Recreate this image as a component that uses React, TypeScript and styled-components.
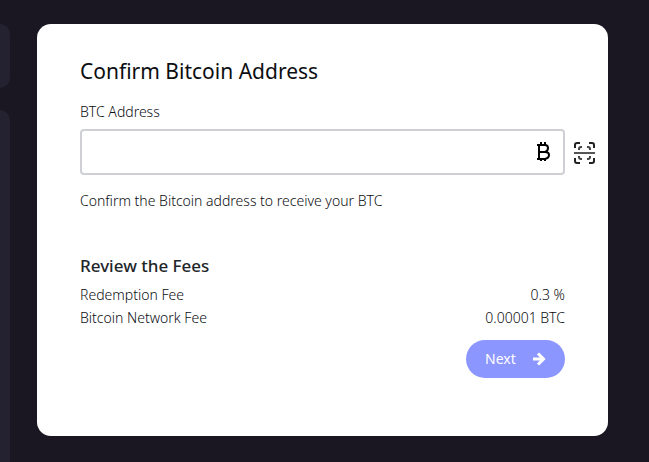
import React from "react";
import styled, { createGlobalStyle } from "styled-components";

const GlobalStyle = createGlobalStyle`
  *, *::before, *::after { box-sizing: border-box; }
  body {
    margin: 0;
    background: #1a1723;
    color: #0c0e12;
    font: 300 14px/20px "Noto Sans", "Open Sans", sans-serif;
  }
`;

const Page = styled.div`
  display: flex;
  gap: 27px;
  min-height: 100vh;
  padding: 24px 41px 0 0;
`;

const Rail = styled.aside`
  display: flex;
  flex-direction: column;
  gap: 22px;
  flex: 0 0 10px;
`;

const Panel = styled.div<{ $fill?: boolean }>`
  flex: ${(p) => (p.$fill ? "1 0 auto" : "0 0 64px")};
  background: #242131;
  border-radius: ${(p) => (p.$fill ? "0 12px 0 0" : "0 12px 12px 0")};
`;

const Card = styled.form`
  display: grid;
  flex: 1;
  align-self: flex-start;
  grid-template-columns: minmax(0, 1fr) 23px;
  column-gap: 8px;
  padding: 32px 12px 58px 43px;
  background: #fff;
  border-radius: 14px;
`;

const Title = styled.h1`
  grid-column: 1;
  margin: 0 0 16px;
  font-size: 21px;
  line-height: 30px;
  font-weight: 400;
`;

const Label = styled.label`
  grid-column: 1;
  margin-bottom: 7px;
`;

const Field = styled.div`
  display: flex;
  grid-column: 1;
  align-items: center;
  height: 46px;
  padding-right: 12px;
  border: 2px solid #ced0d5;
  border-radius: 4px;
  &:focus-within { border-color: #8c96ff; }
`;

const Input = styled.input`
  flex: 1;
  min-width: 0;
  height: 100%;
  padding: 0 12px;
  border: 0;
  outline: 0;
  background: transparent;
  color: inherit;
  font: inherit;
`;

const ScanButton = styled.button`
  display: flex;
  grid-column: 2;
  align-items: center;
  justify-content: center;
  padding: 2px 0 0;
  border: 0;
  background: none;
  color: #222;
  cursor: pointer;
`;

const Hint = styled.p`
  grid-column: 1;
  margin: 16px 0 43px;
`;

const Subtitle = styled.h2`
  grid-column: 1;
  margin: 0 0 5px;
  color: #212529;
  font-size: 17px;
  line-height: 24px;
  font-weight: 500;
`;

const Fees = styled.dl`
  grid-column: 1;
  margin: 0 0 11px;
`;

const Fee = styled.div`
  display: flex;
  justify-content: space-between;
  line-height: 23px;
  dd { margin: 0; }
`;

const NextButton = styled.button`
  display: flex;
  grid-column: 1;
  justify-self: end;
  align-items: center;
  justify-content: space-between;
  width: 99px;
  height: 38px;
  padding: 0 19px;
  border: 0;
  border-radius: 19px;
  background: #8c96ff;
  color: #fff;
  font: inherit;
  font-weight: 400;
  cursor: pointer;
`;

const BitcoinIcon = () => (
  <svg width="15" height="20" viewBox="0 0 15 20" fill="none" stroke="#000" strokeWidth="2" aria-hidden="true">
    <path d="M1 3H9Q12 3 12 6T9 10H3M9 10Q13 10 13 13T9 17H1M3 3V17" />
    <path d="M5 0V3M9 0V3M5 17V19M9 17V19" />
  </svg>
);

const ScanIcon = () => (
  <svg width="23" height="24" viewBox="0 0 23 24" fill="none" stroke="currentColor" strokeWidth="2" aria-hidden="true">
    <path d="M2 7V4Q2 2 4 2H7M16 2H19Q21 2 21 4V7M2 17V20Q2 22 4 22H7M16 22H19Q21 22 21 20V17" />
    <path d="M6 9V8Q6 6 8 6H9M14 6H15Q17 6 17 8V9M6 15V16Q6 18 8 18H9M14 18H15Q17 18 17 16V15" stroke="#444" />
    <path d="M1 12H22" stroke="#555" />
  </svg>
);

const ArrowIcon = () => (
  <svg width="14" height="14" viewBox="0 0 14 14" fill="none" stroke="currentColor" strokeWidth="3" aria-hidden="true">
    <path d="M1 7H11M6 1.5L11.5 7L6 12.5" />
  </svg>
);

export default function App() {
  return (
    <>
      <GlobalStyle />
      <Page>
        <Rail>
          <Panel />
          <Panel $fill />
        </Rail>
        <Card onSubmit={(e) => e.preventDefault()}>
          <Title>Confirm Bitcoin Address</Title>
          <Label htmlFor="btc-address">BTC Address</Label>
          <Field>
            <Input id="btc-address" type="text" />
            <BitcoinIcon />
          </Field>
          <ScanButton type="button" aria-label="Scan QR code">
            <ScanIcon />
          </ScanButton>
          <Hint>Confirm the Bitcoin address to receive your BTC</Hint>
          <Subtitle>Review the Fees</Subtitle>
          <Fees>
            <Fee>
              <dt>Redemption Fee</dt>
              <dd>0.3 %</dd>
            </Fee>
            <Fee>
              <dt>Bitcoin Network Fee</dt>
              <dd>0.00001 BTC</dd>
            </Fee>
          </Fees>
          <NextButton type="submit">
            Next
            <ArrowIcon />
          </NextButton>
        </Card>
      </Page>
    </>
  );
}
